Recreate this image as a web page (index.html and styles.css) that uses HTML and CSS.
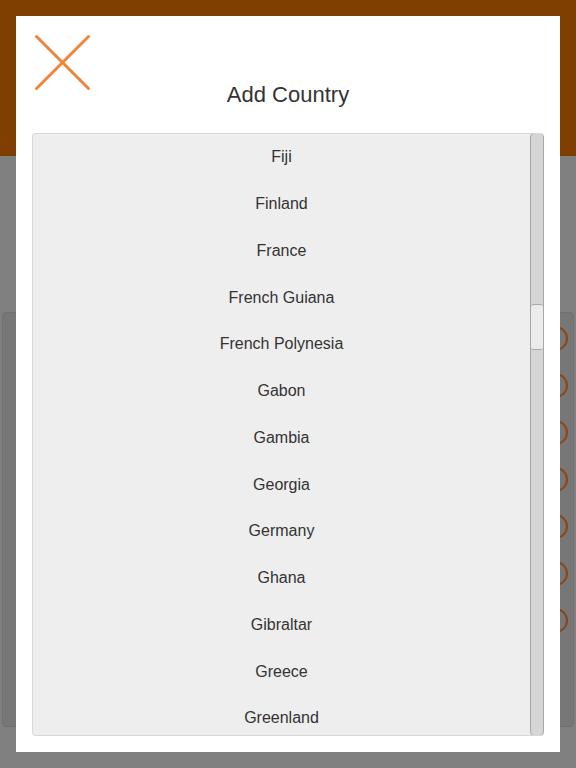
FILE: index.html
```html
<!DOCTYPE html>
<html lang="en">
<head>
  <meta charset="UTF-8" />
  <meta name="viewport" content="width=device-width, initial-scale=1.0"/>
  <title>Add Country</title>
  <link rel="stylesheet" href="styles.css">
</head>
<body>

  <div class="app">
    <div class="topbar"></div>
    <div class="card">
      <div class="row"><span class="dot"></span></div>
      <div class="row"><span class="dot"></span></div>
      <div class="row"><span class="dot"></span></div>
      <div class="row"><span class="dot"></span></div>
      <div class="row"><span class="dot"></span></div>
      <div class="row"><span class="dot"></span></div>
      <div class="row"><span class="dot"></span></div>
    </div>
  </div>

  <div class="modal">
    <div class="modal-head">
      <button class="close-btn" aria-label="Close">
        <svg width="56" height="56" viewBox="0 0 56 56">
          <line x1="2.5" y1="2.5" x2="54.5" y2="54.5" stroke="#f0843a" stroke-width="3" stroke-linecap="round"/>
          <line x1="54.5" y1="2.5" x2="2.5" y2="54.5" stroke="#f0843a" stroke-width="3" stroke-linecap="round"/>
        </svg>
      </button>
      <h2 class="title">Add Country</h2>
    </div>

    <div class="list-box">
      <ul class="list">
        <li>Fiji</li>
        <li>Finland</li>
        <li>France</li>
        <li>French Guiana</li>
        <li>French Polynesia</li>
        <li>Gabon</li>
        <li>Gambia</li>
        <li>Georgia</li>
        <li>Germany</li>
        <li>Ghana</li>
        <li>Gibraltar</li>
        <li>Greece</li>
        <li>Greenland</li>
      </ul>
      <div class="scrollbar"><div class="thumb"></div></div>
    </div>
  </div>

</body>
</html>
```

FILE: styles.css
```css
html, body {
  margin: 0;
  height: 100%;
}
body {
  background: #808080;
  font-family: "Liberation Sans", Arial, sans-serif;
  color: #333;
  overflow: hidden;
}

/* dimmed page behind the dialog */
.topbar {
  height: 156px;
  background: #7f3f00;
}
.card {
  margin: 156px 2px 0 2px;
  height: 415px;
  padding-top: 2px;
  box-sizing: border-box;
  background: #777;
  border: 1px solid #707070;
  border-radius: 4px;
}
.row {
  height: 47px;
  display: flex;
  align-items: center;
  justify-content: flex-end;
  padding-right: 5px;
}
.dot {
  width: 21px;
  height: 21px;
  border: 2px solid #8a4614;
  border-radius: 50%;
}

/* dialog */
.modal {
  position: fixed;
  top: 16px;
  left: 16px;
  width: 544px;
  height: 736px;
  background: #fff;
  padding: 16px;
  box-sizing: border-box;
  display: flex;
  flex-direction: column;
}
.modal-head {
  height: 101px;
  display: grid;
  grid-template-columns: 1fr auto 1fr;
}
.close-btn {
  align-self: start;
  justify-self: start;
  margin: 2px 0 0 2px;
  padding: 0;
  border: none;
  background: none;
  width: 56px;
  height: 56px;
  cursor: pointer;
}
.close-btn svg {
  display: block;
}
.title {
  grid-column: 2;
  align-self: end;
  margin: 0 0 25px 0;
  font-size: 22px;
  font-weight: normal;
  line-height: 26px;
  color: #333;
}

.list-box {
  flex: 1;
  display: flex;
  background: #eee;
  border: 1px solid #d8d8d8;
  border-right: none;
  border-radius: 4px;
  overflow: hidden;
}
.list {
  flex: 1;
  list-style: none;
  margin: 0;
  padding: 0;
}
.list li {
  height: 46.75px;
  display: flex;
  align-items: center;
  justify-content: center;
  font-size: 16px;
}
.scrollbar {
  width: 12px;
  margin: -1px 0;
  background: #d6d6d6;
  border: 1px solid #a8a8a8;
  border-radius: 4px;
  padding-top: 170px;
}
.thumb {
  height: 44px;
  background: #ececec;
  border-top: 1px solid #a8a8a8;
  border-bottom: 1px solid #a8a8a8;
  border-radius: 3px;
}
```
